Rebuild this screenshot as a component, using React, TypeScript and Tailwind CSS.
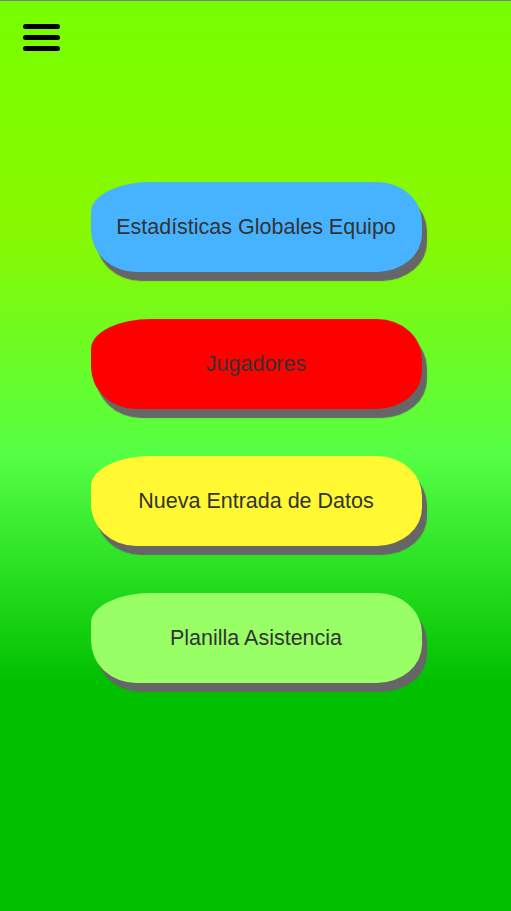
import React from "react";

const buttons = [
  { label: "Estadísticas Globales Equipo", cls: "bg-[#47b3ff]" },
  { label: "Jugadores", cls: "bg-[#ff0000]" },
  { label: "Nueva Entrada de Datos", cls: "bg-[#fff833]" },
  { label: "Planilla Asistencia", cls: "bg-[#99ff66]" },
];

export default function App() {
  return (
    <div
      className="w-[511px] h-[911px] border-t border-[#808080] bg-[linear-gradient(to_bottom,#76ff00_0%,#88f800_25%,#55ff44_50%,#00c000_75%,#00c000_100%)] flex flex-col"
      style={{ fontFamily: '"Liberation Sans", Arial, sans-serif' }}
    >
      <div className="pl-[23px] pt-[23px] flex flex-col gap-[6px]">
        <div className="w-[37px] h-[5px] rounded-full bg-black" />
        <div className="w-[37px] h-[5px] rounded-full bg-black" />
        <div className="w-[37px] h-[5px] rounded-full bg-black" />
      </div>
      <div className="mt-[131px] pl-[1px] flex flex-col items-center gap-[47px]">
        {buttons.map((b) => (
          <div
            key={b.label}
            className={`w-[331px] h-[90px] flex items-center justify-center text-[21.5px] text-[#333333] ${b.cls} rounded-tl-[60px_30px] rounded-tr-[45px_40px] rounded-br-[45px_38px] rounded-bl-[45px_42px] shadow-[5px_9px_1px_#666666]`}
          >
            {b.label}
          </div>
        ))}
      </div>
    </div>
  );
}
